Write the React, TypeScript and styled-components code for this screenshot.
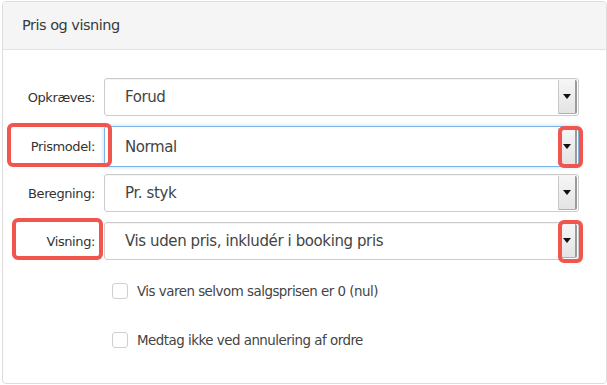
import styled, { createGlobalStyle } from "styled-components";

const GlobalStyle = createGlobalStyle`
  html, body {
    margin: 0;
    padding: 0;
    background: #ffffff;
  }
  body {
    font-family: "DejaVu Sans", Verdana, sans-serif;
  }
`;

type FieldProps = {
  label: string;
  value: string;
  focused?: boolean;
  labelMark?: { left: number; top: number; width: number; height: number };
  arrowMark?: { top: number; height: number };
};

const fields: FieldProps[] = [
  { label: "Opkræves:", value: "Forud" },
  {
    label: "Prismodel:",
    value: "Normal",
    focused: true,
    labelMark: { left: 4, top: -3, width: 105, height: 44 },
    arrowMark: { top: -1, height: 42 },
  },
  { label: "Beregning:", value: "Pr. styk" },
  {
    label: "Visning:",
    value: "Vis uden pris, inkludér i booking pris",
    labelMark: { left: 9, top: -4, width: 91, height: 42 },
    arrowMark: { top: -3, height: 43 },
  },
];

const checks = [
  "Vis varen selvom salgsprisen er 0 (nul)",
  "Medtag ikke ved annulering af ordre",
];

const Field = ({ label, value, focused, labelMark, arrowMark }: FieldProps) => (
  <Row>
    <Label>{label}</Label>
    <Select $focused={focused}>
      <SelectText>{value}</SelectText>
      <ArrowButton>
        <Caret />
      </ArrowButton>
      {arrowMark && (
        <Mark style={{ right: -5, top: arrowMark.top, width: 25, height: arrowMark.height }} />
      )}
    </Select>
    {labelMark && <Mark style={labelMark} />}
  </Row>
);

export default function App() {
  return (
    <>
      <GlobalStyle />
      <Panel>
        <Header>Pris og visning</Header>
        <Body>
          <Fields>
            {fields.map((f) => (
              <Field key={f.label} {...f} />
            ))}
          </Fields>
          <Checks>
            {checks.map((c) => (
              <CheckRow key={c}>
                <Box />
                <CheckText>{c}</CheckText>
              </CheckRow>
            ))}
          </Checks>
        </Body>
      </Panel>
    </>
  );
}

const Panel = styled.div`
  box-sizing: border-box;
  width: 605px;
  height: 383px;
  margin: 1px 0 0 2px;
  border: 1px solid #dddddd;
  border-radius: 4px;
  overflow: hidden;
  background: #ffffff;
`;

const Header = styled.div`
  box-sizing: border-box;
  height: 48px;
  display: flex;
  align-items: center;
  padding: 0 0 2px 19px;
  background: #f5f5f5;
  border-bottom: 1px solid #e2e2e2;
  color: #3a3a3a;
  font-size: 14.5px;
  letter-spacing: -0.5px;
`;

const Body = styled.div`
  padding: 28px 27px 0 0;
`;

const Fields = styled.div`
  display: flex;
  flex-direction: column;
  gap: 10px;
`;

const Row = styled.div`
  position: relative;
  display: grid;
  grid-template-columns: 101px 1fr;
  align-items: center;
  height: 38px;
`;

const Label = styled.div`
  text-align: right;
  padding-right: 9px;
  color: #333333;
  font-size: 13px;
  letter-spacing: -0.4px;
`;

const Select = styled.div<{ $focused?: boolean }>`
  position: relative;
  box-sizing: border-box;
  height: ${(p) => (p.$focused ? "41px" : "38px")};
  display: flex;
  align-items: center;
  border: 1px solid ${(p) => (p.$focused ? "#7fb3e3" : "#cccccc")};
  border-radius: 3px;
  background: #ffffff;
  box-shadow: ${(p) =>
    p.$focused ? "0 0 4px rgba(102, 175, 233, 0.45)" : "inset 0 1px 1px rgba(0,0,0,0.05)"};
`;

const SelectText = styled.div`
  flex: 1;
  padding-left: 20px;
  color: #444444;
  font-size: 15px;
  letter-spacing: -0.4px;
`;

const ArrowButton = styled.div`
  box-sizing: border-box;
  align-self: stretch;
  width: 19px;
  margin: 1px 1px 1px 0;
  display: flex;
  align-items: center;
  justify-content: center;
  background: linear-gradient(#f6f6f6, #e4e4e4);
  border-left: 1px solid #c8c8c8;
  border-right: 2px solid #9a9a9a;
  border-bottom: 1px solid #b0b0b0;
  border-radius: 0 2px 2px 0;
`;

const Caret = styled.span`
  width: 0;
  height: 0;
  border-left: 4px solid transparent;
  border-right: 4px solid transparent;
  border-top: 5px solid #111111;
`;

const Mark = styled.span`
  position: absolute;
  box-sizing: border-box;
  border: 4px solid #f2544e;
  border-radius: 6px;
  pointer-events: none;
`;

const Checks = styled.div`
  display: flex;
  flex-direction: column;
  gap: 33px;
  padding: 23px 0 0 109px;
`;

const CheckRow = styled.label`
  display: flex;
  align-items: center;
  gap: 9px;
  height: 16px;
`;

const Box = styled.span`
  box-sizing: border-box;
  width: 16px;
  height: 16px;
  border: 1px solid #cfcfcf;
  border-radius: 3px;
  background: #ffffff;
`;

const CheckText = styled.span`
  color: #444444;
  font-size: 13.4px;
  letter-spacing: -0.5px;
`;
